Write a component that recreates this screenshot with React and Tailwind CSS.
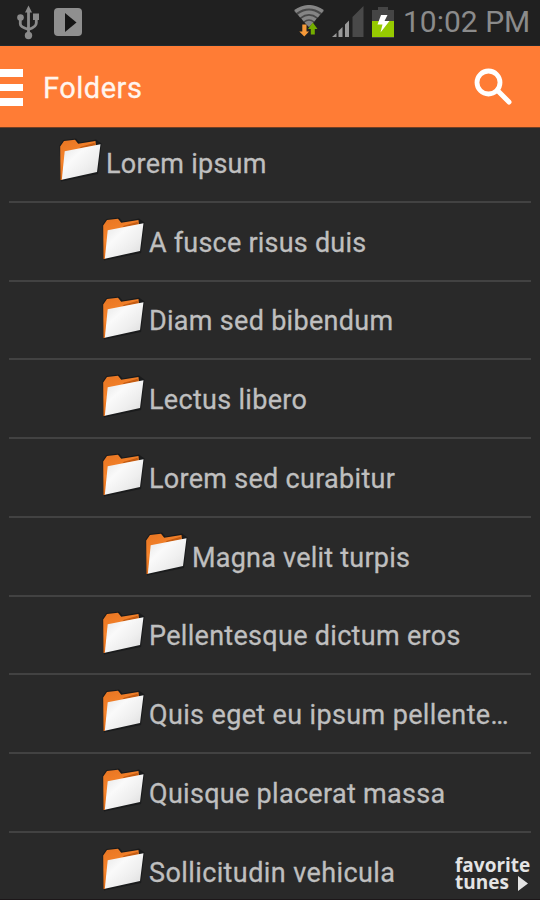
import React from "react";

const folders = [
  { name: "Lorem ipsum", indent: "pl-[59px]", tracking: "tracking-[0.27px]" },
  { name: "A fusce risus duis", indent: "pl-[102px]", tracking: "tracking-[0.22px]" },
  { name: "Diam sed bibendum", indent: "pl-[102px]", tracking: "tracking-[0.29px]" },
  { name: "Lectus libero", indent: "pl-[102px]", tracking: "tracking-[0.3px]" },
  { name: "Lorem sed curabitur", indent: "pl-[102px]", tracking: "tracking-[0.29px]" },
  { name: "Magna velit turpis", indent: "pl-[145px]", tracking: "tracking-[0.22px]" },
  { name: "Pellentesque dictum eros", indent: "pl-[102px]", tracking: "tracking-[0.3px]" },
  { name: "Quis eget eu ipsum pellente…", indent: "pl-[102px]", tracking: "tracking-[0.36px]" },
  { name: "Quisque placerat massa", indent: "pl-[102px]", tracking: "tracking-[0.3px]" },
  { name: "Sollicitudin vehicula", indent: "pl-[102px]", tracking: "tracking-[0.4px]" },
];

function FolderIcon() {
  return (
    <svg width="43" height="44" viewBox="0 0 43 44" className="shrink-0">
      <defs>
        <linearGradient id="orange" x1="0" y1="0" x2="0.3" y2="1">
          <stop offset="0" stopColor="#e87522" />
          <stop offset="0.5" stopColor="#f5842c" />
          <stop offset="1" stopColor="#d96510" />
        </linearGradient>
        <linearGradient id="paper" x1="0" y1="0" x2="1" y2="1">
          <stop offset="0" stopColor="#e4e4e4" />
          <stop offset="0.35" stopColor="#fafafa" />
          <stop offset="0.65" stopColor="#eeeeee" />
          <stop offset="1" stopColor="#dadada" />
        </linearGradient>
      </defs>
      <path d="M0.500 7.500L4.500 2L17 0.500L20.500 4.500L37 1.500L42.500 5.500L39 36L2 43.500Z" fill="#101314" opacity=".6" />
      <path d="M1.200 8.500L5 3L16 1.700L19.200 5.800L36.500 3L37 9L8 18L3 42H1.500Z" fill="url(#orange)" />
      <path d="M22 8.800L35.500 4.800L36.500 7.500L20 10.500Z" fill="#b04d0a" opacity=".7" />
      <path d="M5.700 13.200L41.500 6.300L38 34L2.800 41.700Z" fill="url(#paper)" />
    </svg>
  );
}

function UsbIcon() {
  return (
    <svg width="24" height="36" viewBox="0 0 24 36" fill="none" stroke="#8b8b8b" strokeWidth="2.800">
      <path d="M11.500 7V32M3.300 15V19Q3.300 22 11.500 24.500M19.300 14V18Q19.300 22 11.500 24.500" />
      <path d="M11.500 0.500L15 7.500H8Z" fill="#8b8b8b" stroke="none" />
      <circle cx="11.500" cy="30.500" r="3.700" fill="#8b8b8b" stroke="none" />
      <circle cx="3.500" cy="12.500" r="3.300" fill="#8b8b8b" stroke="none" />
      <path d="M16 8.500H22V15H16Z" fill="#8b8b8b" stroke="none" />
    </svg>
  );
}

function WifiIcon() {
  return (
    <svg width="30" height="32" viewBox="0 0 30 32" fill="none">
      <path d="M0 6Q15 -5 30 6L15 22Z" fill="#484848" />
      <path d="M1.200 6.500Q15 -3 28.800 6.500M5 11Q15 3.600 25 11M8.500 15Q15 10 21.500 15" stroke="#858585" strokeWidth="3.500" />
      <path d="M10.500 17.500Q15 14 19.500 17.500L15 22Z" fill="#858585" />
      <path d="M8.300 19.500H12.500V26.500H15L10.300 31.500L5.300 26.500H8.300Z" fill="#f69a39" />
      <path d="M16.800 29.500H20.800V24H23.500L18.800 17.500L14 24H16.800Z" fill="#74ad00" />
    </svg>
  );
}

function SignalIcon() {
  return (
    <svg width="32" height="32" viewBox="0 0 32 32">
      <path d="M0 31L4.500 27V31Z" fill="#999" />
      <path d="M6.500 25L10.500 21V31H6.500ZM13 18.500L17 14.500V31H13Z" fill="#999" />
      <path d="M20.500 11L31.500 0V31H20.500Z" fill="#494949" />
    </svg>
  );
}

function BatteryIcon() {
  return (
    <svg width="22" height="31" viewBox="0 0 22 31">
      <path d="M6 0H16V3H22V31H0V3H6Z" fill="#454545" />
      <path d="M0 14H22V30H0Z" fill="#96ca00" />
      <path d="M9 8H15.500L12.500 14H17.500L8.500 25.500L10.500 17.500H5.500Z" fill="#fff" />
    </svg>
  );
}

export default function App() {
  return (
    <div className="relative flex h-[900px] w-[540px] flex-col overflow-hidden bg-[#292929] font-['Roboto','Liberation_Sans',sans-serif]">
      <div className="flex h-[46px] shrink-0 items-start border-b border-[#202a30] bg-[#202020]">
        <div className="ml-[17px] mt-[5px]"><UsbIcon /></div>
        <svg className="ml-[13px] mt-2" width="28" height="28" viewBox="0 0 28 28">
          <rect width="28" height="28" rx="4" fill="#8f8f8f" />
          <path d="M11 5L22.500 14.500L11 24Z" fill="#151515" />
        </svg>
        <div className="ml-[212px] mt-[5px]"><WifiIcon /></div>
        <div className="ml-[8px] mt-[6px]"><SignalIcon /></div>
        <div className="ml-[8px] mt-[7px]"><BatteryIcon /></div>
        <div className="ml-[9px] mt-[4px] whitespace-nowrap text-[30px] leading-[36px] text-[#8b8b8b]">10:02 PM</div>
      </div>

      <header className="flex h-[82px] shrink-0 items-center border-b border-[#703f25] bg-[#ff7c35]">
        <div className="mt-[2px] flex w-[23px] flex-col gap-[7px]">
          <span className="h-[7.500px] bg-white" />
          <span className="h-[7.500px] bg-white" />
          <span className="h-[7.500px] bg-white" />
        </div>
        <h1 className="ml-[20px] mt-[2px] text-[29px] leading-[36px] tracking-[0.5px] text-[#fff5ee] [-webkit-text-stroke:0.3px]">Folders</h1>
        <svg className="ml-auto mr-[27px] mt-px" width="40" height="38" viewBox="0 0 40 38" fill="none" stroke="#fff" strokeLinecap="round">
          <circle cx="15.500" cy="14.500" r="11.500" strokeWidth="4.800" />
          <path d="M24.500 22.500L36 34" strokeWidth="5" />
        </svg>
      </header>

      <ul className="-mt-[4px] shrink-0 px-[9px]">
        {folders.map((f) => (
          <li key={f.name} className="h-[78.750px] border-b-2 border-[#424242]">
            <div className={`-ml-[9px] flex items-start pt-[14px] ${f.indent}`}>
              <FolderIcon />
              <span className={`ml-[4px] mt-[9.800px] whitespace-nowrap text-[27px] leading-[32px] text-[#bfbfbf] [-webkit-text-stroke:0.3px] ${f.tracking}`}>{f.name}</span>
            </div>
          </li>
        ))}
      </ul>

      <div className="absolute left-[455px] top-[857px] font-['Open_Sans','Noto_Sans',sans-serif] text-[19px] font-bold leading-[17px] text-[#e4e4e4]">
        <div>favorite</div>
        <div className="-mt-px flex items-center gap-[9px]">
          tunes
          <svg className="mt-[3px]" width="10" height="15" viewBox="0 0 10 15"><path d="M0 0L10 7.500L0 15Z" fill="#e4e4e4" /></svg>
        </div>
      </div>
      <div className="absolute inset-x-0 bottom-0 h-px bg-[#1c1719]" />
    </div>
  );
}
